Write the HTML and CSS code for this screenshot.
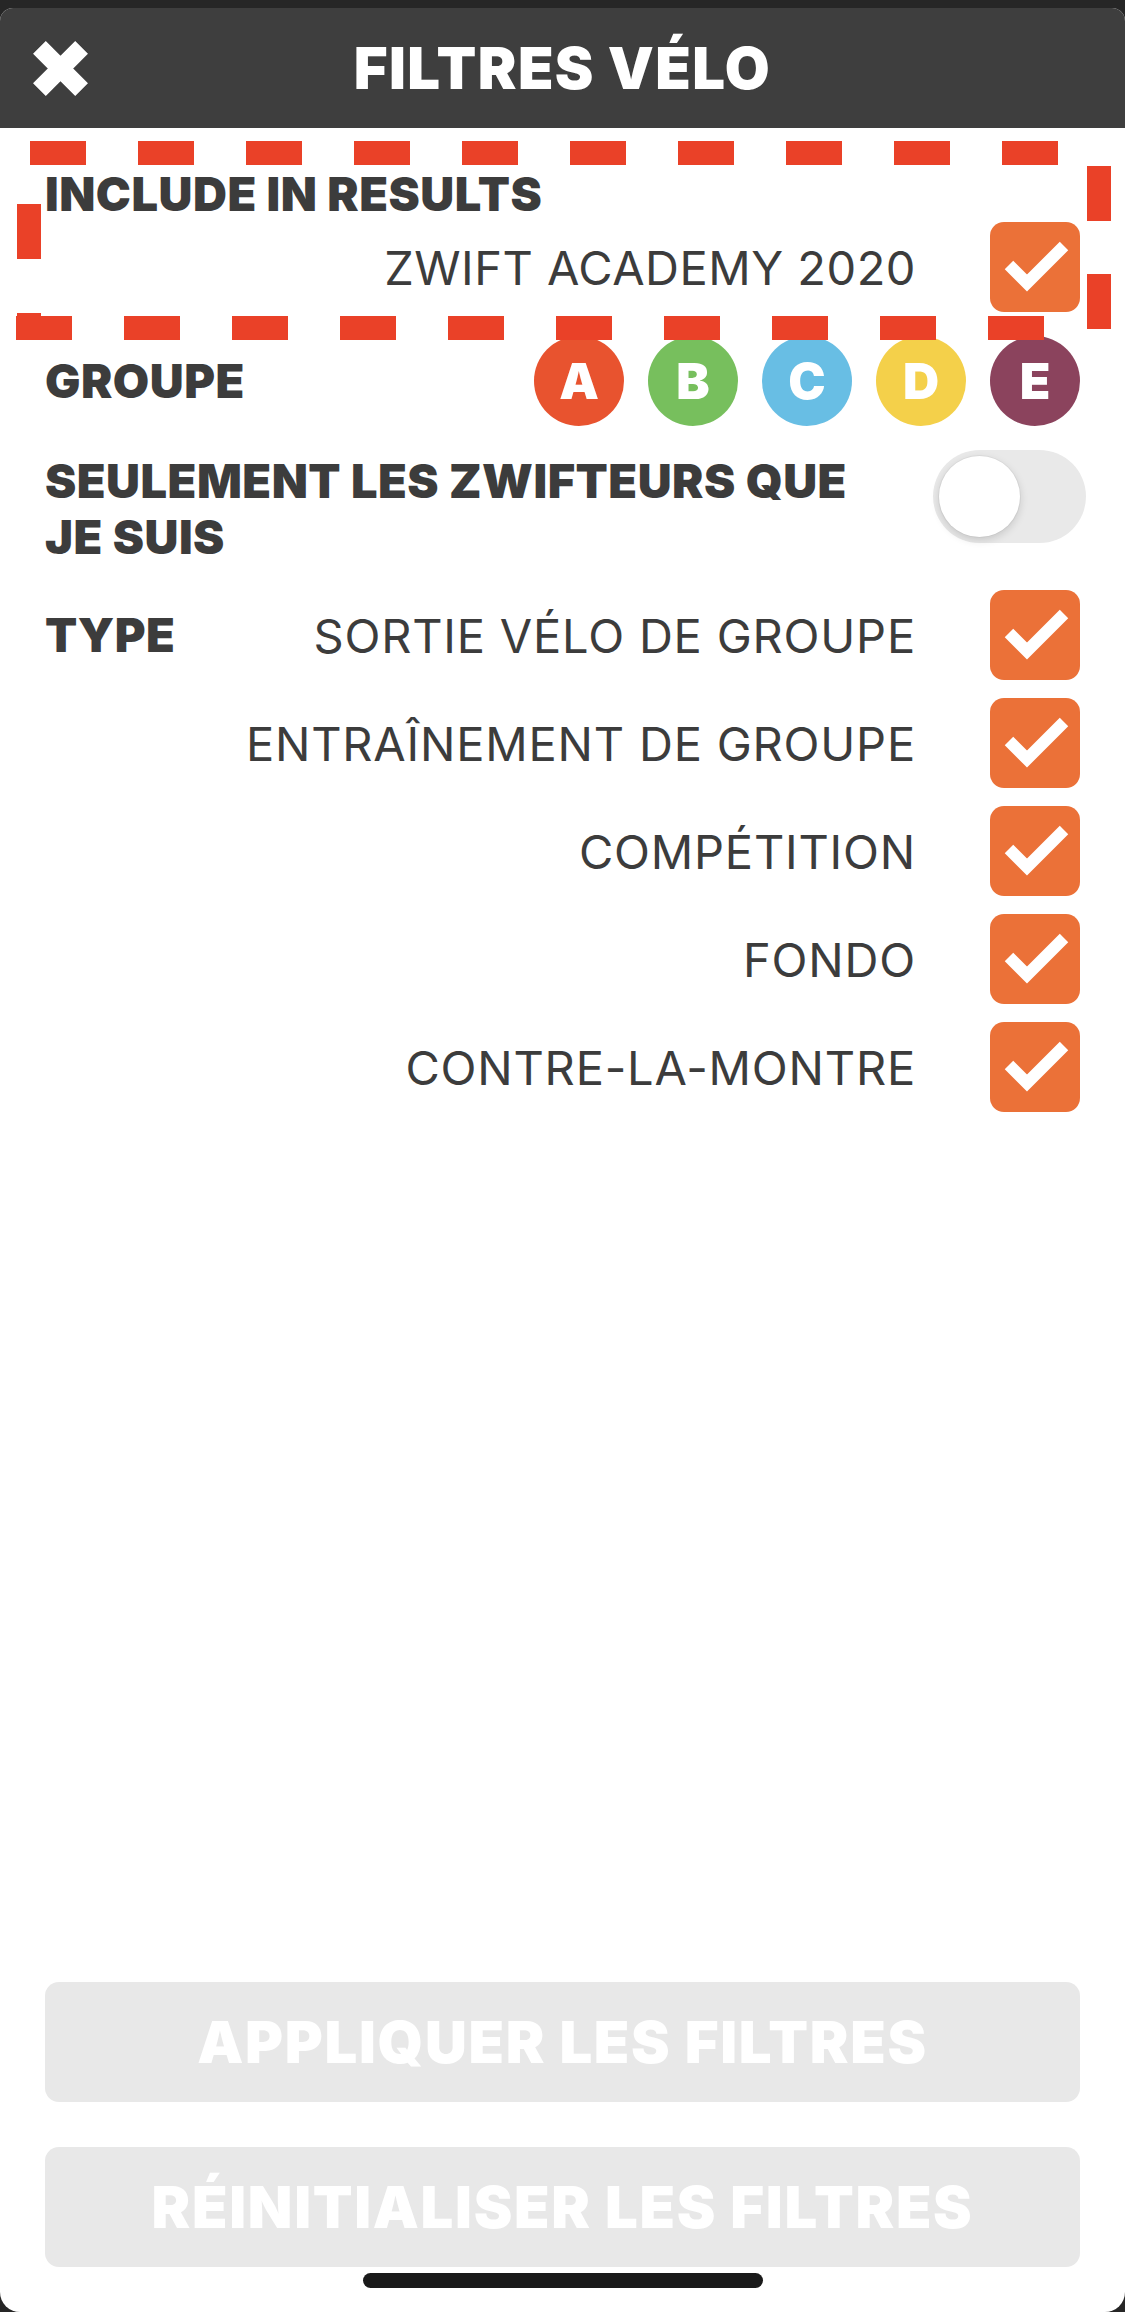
FILE: index.html
```html
<!DOCTYPE html>
<html lang="fr">
<head>
    <meta charset="UTF-8">
    <meta name="viewport" content="width=device-width, initial-scale=1.0">
    <title>Filtres vélo</title>
    <link rel="stylesheet" href="styles.css">
</head>
<body>
    <div class="sheet">
        <header class="topbar">
            <button class="close" aria-label="Fermer">
                <svg width="55" height="55" viewBox="0 0 55 55">
                    <path d="M6.4 6.4 L48.6 48.6 M48.6 6.4 L6.4 48.6" stroke="#fff" stroke-width="18" fill="none"/>
                </svg>
            </button>
            <h1>FILTRES VÉLO</h1>
            <span></span>
        </header>

        <main class="filters">
            <section class="include">
                <h2 class="label">INCLUDE IN RESULTS</h2>
                <div class="option">
                    <span>ZWIFT ACADEMY 2020</span>
                    <span class="check"><svg width="90" height="90" viewBox="0 0 90 90"><polyline points="19,43 37,61 74,24" fill="none" stroke="#fff" stroke-width="12"/></svg></span>
                </div>
            </section>

            <div class="row groups">
                <h2 class="label">GROUPE</h2>
                <div class="badges">
                    <span class="badge cat-a">A</span>
                    <span class="badge cat-b">B</span>
                    <span class="badge cat-c">C</span>
                    <span class="badge cat-d">D</span>
                    <span class="badge cat-e">E</span>
                </div>
            </div>

            <div class="row followees">
                <h2 class="label">SEULEMENT LES ZWIFTEURS QUE<br>JE SUIS</h2>
                <span class="switch"><span class="knob"></span></span>
            </div>

            <div class="types">
                <h2 class="label">TYPE</h2>
                <div class="option-list">
                    <div class="option">
                        <span>SORTIE VÉLO DE GROUPE</span>
                        <span class="check"><svg width="90" height="90" viewBox="0 0 90 90"><polyline points="19,43 37,61 74,24" fill="none" stroke="#fff" stroke-width="12"/></svg></span>
                    </div>
                    <div class="option">
                        <span>ENTRAÎNEMENT DE GROUPE</span>
                        <span class="check"><svg width="90" height="90" viewBox="0 0 90 90"><polyline points="19,43 37,61 74,24" fill="none" stroke="#fff" stroke-width="12"/></svg></span>
                    </div>
                    <div class="option">
                        <span>COMPÉTITION</span>
                        <span class="check"><svg width="90" height="90" viewBox="0 0 90 90"><polyline points="19,43 37,61 74,24" fill="none" stroke="#fff" stroke-width="12"/></svg></span>
                    </div>
                    <div class="option">
                        <span>FONDO</span>
                        <span class="check"><svg width="90" height="90" viewBox="0 0 90 90"><polyline points="19,43 37,61 74,24" fill="none" stroke="#fff" stroke-width="12"/></svg></span>
                    </div>
                    <div class="option">
                        <span>CONTRE-LA-MONTRE</span>
                        <span class="check"><svg width="90" height="90" viewBox="0 0 90 90"><polyline points="19,43 37,61 74,24" fill="none" stroke="#fff" stroke-width="12"/></svg></span>
                    </div>
                </div>
            </div>
        </main>

        <footer class="actions">
            <button class="action" disabled>APPLIQUER LES FILTRES</button>
            <button class="action" disabled>RÉINITIALISER LES FILTRES</button>
            <div class="home-bar"></div>
        </footer>
    </div>

    <!-- red dashed frame around the "include in results" block -->
    <svg class="highlight" width="1125" height="360" viewBox="0 0 1125 360">
        <g stroke="#ea4128" stroke-width="24" fill="none">
            <line x1="30" y1="153" x2="1060" y2="153" stroke-dasharray="56 52"/>
            <line x1="1099" y1="166" x2="1099" y2="330" stroke-dasharray="55 53"/>
            <line x1="16" y1="328" x2="1045" y2="328" stroke-dasharray="56 52"/>
            <line x1="29" y1="204" x2="29" y2="340" stroke-dasharray="55 54"/>
        </g>
    </svg>
</body>
</html>
```

FILE: styles.css
```css
body {
    margin: 0;
    padding-top: 8px;
    background: #262626;
    font-family: Inter, 'Noto Sans', sans-serif;
    color: #3c3c3c;
    position: relative;
}
.sheet {
    height: 2304px;
    background: #fff;
    border-radius: 13px 13px 20px 20px;
    overflow: hidden;
    display: flex;
    flex-direction: column;
}
.topbar {
    height: 120px;
    background: #3e3e3e;
    display: grid;
    grid-template-columns: 1fr auto 1fr;
    align-items: center;
}
.close {
    justify-self: start;
    margin-left: 33px;
    padding: 0;
    border: none;
    background: none;
    display: flex;
}
.topbar h1 {
    margin: 0;
    color: #fff;
    font-size: 58px;
    font-weight: 900;
    line-height: 1;
    letter-spacing: 1.4px;
}
.filters {
    padding: 38px 45px 0 45px;
}
.label {
    margin: 0;
    font-size: 47px;
    font-weight: 900;
    line-height: 56px;
    letter-spacing: 0.5px;
    color: #3c3c3c;
}
.option {
    height: 90px;
    display: flex;
    justify-content: flex-end;
    align-items: center;
    gap: 74px;
    font-size: 47px;
    font-weight: 400;
    letter-spacing: 0.8px;
}
.include .option {
    letter-spacing: 0.5px;
}
.check {
    width: 90px;
    height: 90px;
    border-radius: 14px;
    background: #eb7138;
    display: flex;
}
.row {
    display: flex;
    justify-content: space-between;
    margin-top: 24px;
}
.groups {
    align-items: center;
}
.badges {
    display: flex;
    gap: 24px;
}
.badge {
    width: 90px;
    height: 90px;
    border-radius: 50%;
    display: flex;
    align-items: center;
    justify-content: center;
    color: #fff;
    font-size: 50px;
    font-weight: 900;
}
.cat-a { background: #e8532f; }
.cat-b { background: #77bf5d; }
.cat-c { background: #68bee4; }
.cat-d { background: #f4d04a; }
.cat-e { background: #8b435d; }
.followees {
    align-items: flex-start;
}
.followees .label {
    padding-top: 3px;
}
.switch {
    width: 153px;
    height: 93px;
    border-radius: 47px;
    background: #e9e9e9;
    margin-right: -6px;
    padding: 6px;
    box-sizing: border-box;
}
.knob {
    display: block;
    width: 81px;
    height: 81px;
    border-radius: 50%;
    background: #fff;
    box-shadow: 0 3px 8px rgba(0,0,0,0.15), 0 0 0 1px rgba(0,0,0,0.04);
}
.types {
    display: grid;
    grid-template-columns: auto 1fr;
    margin-top: 25px;
}
.types .label {
    line-height: 90px;
}
.option-list {
    display: flex;
    flex-direction: column;
    gap: 18px;
}
.actions {
    margin-top: auto;
    padding: 0 45px 24px;
    display: flex;
    flex-direction: column;
    align-items: center;
}
.action {
    width: 100%;
    height: 120px;
    border: none;
    border-radius: 14px;
    background: #e8e8e8;
    color: #fff;
    font-family: Inter, 'Noto Sans', sans-serif;
    font-size: 58px;
    font-weight: 900;
    letter-spacing: 1.7px;
}
.action + .action {
    margin-top: 45px;
}
.home-bar {
    width: 400px;
    height: 15px;
    border-radius: 8px;
    background: #1a1a1a;
    margin-top: 6px;
}
.highlight {
    position: absolute;
    top: 0;
    left: 0;
    pointer-events: none;
}
```
